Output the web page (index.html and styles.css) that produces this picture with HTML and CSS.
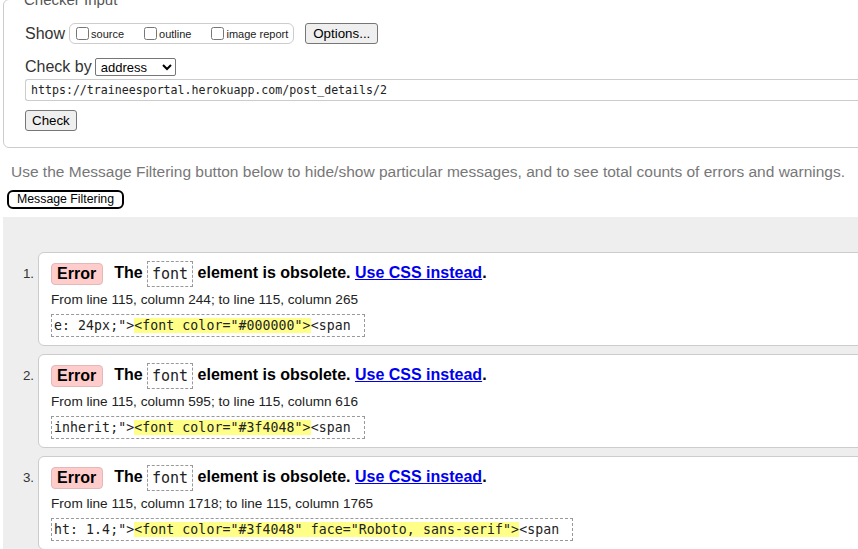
FILE: index.html
```html
<!DOCTYPE html>
<html>
<head>
<meta charset="utf-8">
<title>Nu Html Checker</title>
<link rel="stylesheet" href="styles.css">
</head>
<body>
<form class="checker">
  <fieldset class="input-box">
    <legend>Checker Input</legend>
    <div class="row show-row">
      <span class="lbl">Show</span>
      <span class="opts">
        <label><input type="checkbox">source</label>
        <label><input type="checkbox">outline</label>
        <label><input type="checkbox">image report</label>
      </span>
      <button type="button" class="btn opt-btn">Options...</button>
    </div>
    <div class="row by-row">
      <span class="lbl">Check by</span>
      <select class="sel"><option>address</option></select>
    </div>
    <div class="url">https://traineesportal.herokuapp.com/post_details/2</div>
    <div class="check-row"><button type="button" class="btn">Check</button></div>
  </fieldset>
</form>
<p class="hint">Use the Message Filtering button below to hide/show particular messages, and to see total counts of errors and warnings.</p>
<div class="filter-row"><button type="button" class="filter">Message Filtering</button></div>
<div class="results">
  <ol class="msgs">
    <li class="item">
      <span class="num">1.</span>
      <div class="card">
        <p class="msg"><strong class="badge">Error</strong><span class="msgtext">The <code class="kw">font</code> element is obsolete. <a href="#" class="link">Use CSS instead</a>.</span></p>
        <p class="loc">From line 115, column 244; to line 115, column 265</p>
        <div class="extract-row"><code class="extract">e: 24px;"&gt;<b class="hl">&lt;font color="#000000"&gt;</b>&lt;span</code></div>
      </div>
    </li>
    <li class="item">
      <span class="num">2.</span>
      <div class="card">
        <p class="msg"><strong class="badge">Error</strong><span class="msgtext">The <code class="kw">font</code> element is obsolete. <a href="#" class="link">Use CSS instead</a>.</span></p>
        <p class="loc">From line 115, column 595; to line 115, column 616</p>
        <div class="extract-row"><code class="extract">inherit;"&gt;<b class="hl">&lt;font color="#3f4048"&gt;</b>&lt;span</code></div>
      </div>
    </li>
    <li class="item">
      <span class="num">3.</span>
      <div class="card">
        <p class="msg"><strong class="badge">Error</strong><span class="msgtext">The <code class="kw">font</code> element is obsolete. <a href="#" class="link">Use CSS instead</a>.</span></p>
        <p class="loc">From line 115, column 1718; to line 115, column 1765</p>
        <div class="extract-row"><code class="extract">ht: 1.4;"&gt;<b class="hl">&lt;font color="#3f4048" face="Roboto, sans-serif"&gt;</b>&lt;span</code></div>
      </div>
    </li>
  </ol>
</div>
</body>
</html>
```
FILE: styles.css
```css
html, body {
  margin: 0;
  padding: 0;
  overflow: hidden;
}
body {
  width: 940px;
  font-family: "Liberation Sans", Arial, sans-serif;
  color: #222;
  background: #fff;
}
.checker {
  margin: -9px 0 0 3px;
}
.input-box {
  margin: 0;
  border: 1px solid #ccc;
  border-radius: 6px;
  padding: 15px 20px 16px 21px;
  min-width: 0;
}
.input-box legend {
  font-size: 15px;
  line-height: 17px;
  color: #555;
  padding: 0 2px;
  margin-left: -3px;
}
.row {
  display: flex;
  align-items: center;
}
.show-row {
  height: 21px;
}
.lbl {
  font-size: 16px;
  color: #333;
}
.opts {
  display: flex;
  align-items: center;
  height: 21px;
  box-sizing: border-box;
  margin-left: 4px;
  border: 1px solid #ccc;
  border-radius: 6px;
  padding: 0 5px 0 6px;
  font-size: 11px;
}
.opts label {
  display: flex;
  align-items: center;
  color: #222;
}
.opts label + label {
  margin-left: 20px;
}
.opts input {
  margin: 0 2px 0 0;
  width: 13px;
  height: 13px;
}
.btn {
  height: 21px;
  box-sizing: border-box;
  font-family: "Liberation Sans", Arial, sans-serif;
  font-size: 13.33px;
  color: #000;
  background: #efefef;
  border: 1px solid #767676;
  border-radius: 3px;
  padding: 0 6px;
}
.opt-btn {
  margin-left: 11px;
  padding: 0 7px;
}
.by-row {
  height: 18px;
  margin-top: 14px;
}
.by-row .lbl {
  line-height: 18px;
}
.sel {
  margin-left: 3px;
  width: 81px;
  height: 18px;
  box-sizing: border-box;
  font-family: "Liberation Sans", Arial, sans-serif;
  font-size: 13px;
  color: #000;
  border: 1px solid #767676;
  border-radius: 2px;
  background: #fff;
  padding: 0 0 0 1px;
}
.url {
  margin-top: 3px;
  height: 22px;
  box-sizing: border-box;
  border: 1px solid #ccc;
  border-right: 0;
  border-radius: 3px 0 0 3px;
  padding-left: 5px;
  font-family: "DejaVu Sans Mono", monospace;
  font-size: 11.6px;
  line-height: 20px;
  color: #222;
}
.check-row {
  margin-top: 9px;
  display: flex;
}
.hint {
  margin: 15px 0 0 11px;
  font-size: 15.5px;
  line-height: 18px;
  color: #777;
  white-space: nowrap;
}
.filter-row {
  margin: 9px 0 0 7px;
  display: flex;
}
.filter {
  height: 19px;
  box-sizing: border-box;
  font-family: "Liberation Sans", Arial, sans-serif;
  font-size: 12.3px;
  line-height: 15px;
  color: #000;
  background: #fff;
  border: 2px solid #000;
  border-radius: 6px;
  padding: 0 8px;
}
.results {
  margin: 8px 0 0 3px;
  background: #eee;
  padding: 35px 0 20px 0;
}
.msgs {
  list-style: none;
  margin: 0;
  padding: 0;
}
.item {
  display: flex;
  align-items: flex-start;
  margin-bottom: 8px;
}
.num {
  width: 31px;
  flex: none;
  margin: 9px 4px 0 0;
  text-align: right;
  font-size: 13.33px;
  line-height: 26px;
  color: #333;
}
.card {
  flex: 1;
  background: #fff;
  border: 1px solid #ccc;
  border-radius: 6px 0 0 6px;
  padding: 8px 12px;
}
.msg {
  margin: 0;
  height: 26px;
  display: flex;
  align-items: center;
  font-size: 16px;
  font-weight: bold;
  color: #000;
  white-space: nowrap;
}
.badge {
  height: 22px;
  box-sizing: border-box;
  line-height: 20px;
  padding: 0 6px 0 5px;
  background: #fcc;
  border: 1px solid #e2b8b8;
  border-radius: 4px;
  margin-right: 11px;
}
.kw {
  display: inline-block;
  vertical-align: middle;
  height: 26px;
  box-sizing: border-box;
  line-height: 24px;
  padding: 0 4px;
  border: 1px dashed #999;
  font-family: "DejaVu Sans Mono", monospace;
  font-size: 15px;
  font-weight: normal;
  color: #222;
}
.link {
  color: #00e;
  text-decoration: underline;
}
.loc {
  margin: 4px 0 0;
  font-size: 13.6px;
  line-height: 18px;
  color: #222;
}
.extract-row {
  margin-top: 5px;
  display: flex;
}
.extract {
  height: 23px;
  box-sizing: border-box;
  border: 1px dashed #999;
  padding: 0 13px 0 2px;
  font-family: "DejaVu Sans Mono", monospace;
  font-size: 13.2px;
  letter-spacing: 0.08px;
  line-height: 21px;
  color: #222;
  white-space: pre;
}
.hl {
  font-weight: normal;
  background: #ff8;
}
```
